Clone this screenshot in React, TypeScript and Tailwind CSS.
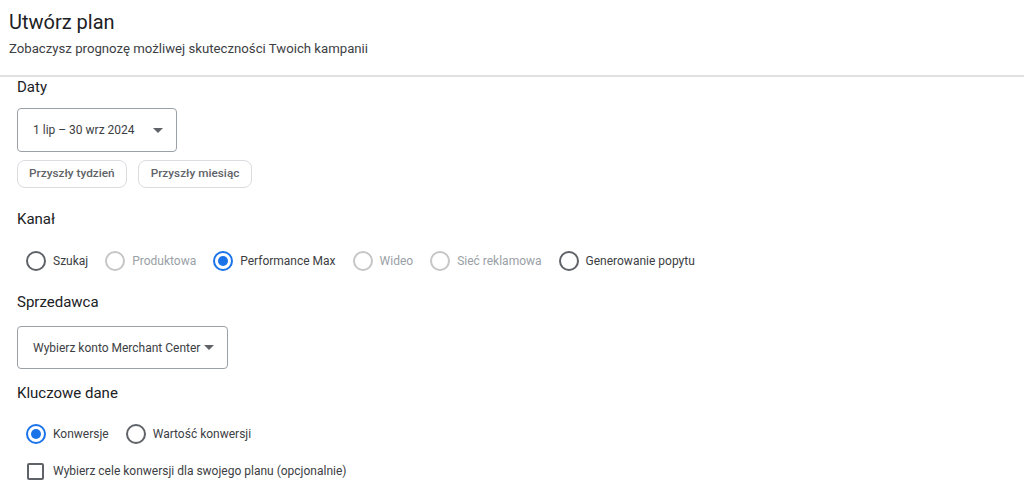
import React from "react";

function Radio({ label, state }: { label: string; state: "on" | "off" | "disabled" }) {
  const ring =
    state === "on"
      ? "border-[#1a73e8]"
      : state === "disabled"
      ? "border-[#c4c7c5]"
      : "border-[#5f6368]";
  const text = state === "disabled" ? "text-[#9aa0a6]" : "text-[#3c4043]";
  return (
    <div className="flex items-center gap-[7px]">
      <div className={`w-[20px] h-[20px] rounded-full border-2 ${ring} flex items-center justify-center`}>
        {state === "on" && <div className="w-[10px] h-[10px] rounded-full bg-[#1a73e8]" />}
      </div>
      <span className={`text-[12px] leading-[20px] whitespace-nowrap ${text}`}>{label}</span>
    </div>
  );
}

function Caret() {
  return (
    <svg width="10" height="5" viewBox="0 0 10 5" className="shrink-0">
      <path d="M0 0 L10 0 L5 5 Z" fill="#5f6368" />
    </svg>
  );
}

export default function App() {
  return (
    <div className="w-[1024px] h-[497px] bg-white overflow-hidden" style={{ fontFamily: "Roboto, 'Liberation Sans', sans-serif" }}>
      <div className="h-[75px] pl-[9px]">
        <div className="pt-[8px] text-[20px] leading-[28px] text-[#202124]">Utwórz plan</div>
        <div className="mt-[3px] text-[13.2px] leading-[20px] text-[#3c4043] whitespace-nowrap">
          Zobaczysz prognozę możliwej skuteczności Twoich kampanii
        </div>
      </div>
      <div className="h-[2px] bg-[#e0e0e0]" />
      <div className="pl-[17px] flex flex-col items-start">
        <div className="text-[15px] leading-[20px] text-[#202124]">Daty</div>
        <div className="mt-[11px] w-[160px] h-[44px] border border-[#9aa0a6] rounded-[4px] flex items-center justify-between pl-[15px] pr-[13px]">
          <span className="text-[12px] text-[#3c4043] whitespace-nowrap">1 lip – 30 wrz 2024</span>
          <Caret />
        </div>
        <div className="mt-[8px] flex gap-[11px]">
          <div className="h-[28px] px-[11px] border border-[#dadce0] rounded-[8px] flex items-center text-[11.8px] font-medium text-[#5f6368] whitespace-nowrap">
            Przyszły tydzień
          </div>
          <div className="h-[28px] px-[12px] border border-[#dadce0] rounded-[8px] flex items-center text-[11.8px] font-medium text-[#5f6368] whitespace-nowrap">
            Przyszły miesiąc
          </div>
        </div>
        <div className="mt-[21px] text-[15px] leading-[20px] text-[#202124]">Kanał</div>
        <div className="mt-[22px] ml-[9px] flex items-center gap-[17px]">
          <Radio label="Szukaj" state="off" />
          <Radio label="Produktowa" state="disabled" />
          <Radio label="Performance Max" state="on" />
          <Radio label="Wideo" state="disabled" />
          <Radio label="Sieć reklamowa" state="disabled" />
          <Radio label="Generowanie popytu" state="off" />
        </div>
        <div className="mt-[21px] text-[15px] leading-[20px] text-[#202124]">Sprzedawca</div>
        <div className="mt-[14px] w-[211px] h-[43px] border border-[#9aa0a6] rounded-[4px] flex items-center justify-between pl-[15px] pr-[13px]">
          <span className="text-[12px] text-[#3c4043] whitespace-nowrap">Wybierz konto Merchant Center</span>
          <Caret />
        </div>
        <div className="mt-[14px] text-[15px] leading-[20px] text-[#202124]">Kluczowe dane</div>
        <div className="mt-[21px] ml-[9px] flex items-center gap-[17px]">
          <Radio label="Konwersje" state="on" />
          <Radio label="Wartość konwersji" state="off" />
        </div>
        <div className="mt-[17px] ml-[10px] flex items-center gap-[9px] h-[20px]">
          <div className="w-[17px] h-[17px] border-2 border-[#5f6368] rounded-[2px]" />
          <span className="text-[12px] text-[#3c4043] whitespace-nowrap">Wybierz cele konwersji dla swojego planu (opcjonalnie)</span>
        </div>
      </div>
    </div>
  );
}
